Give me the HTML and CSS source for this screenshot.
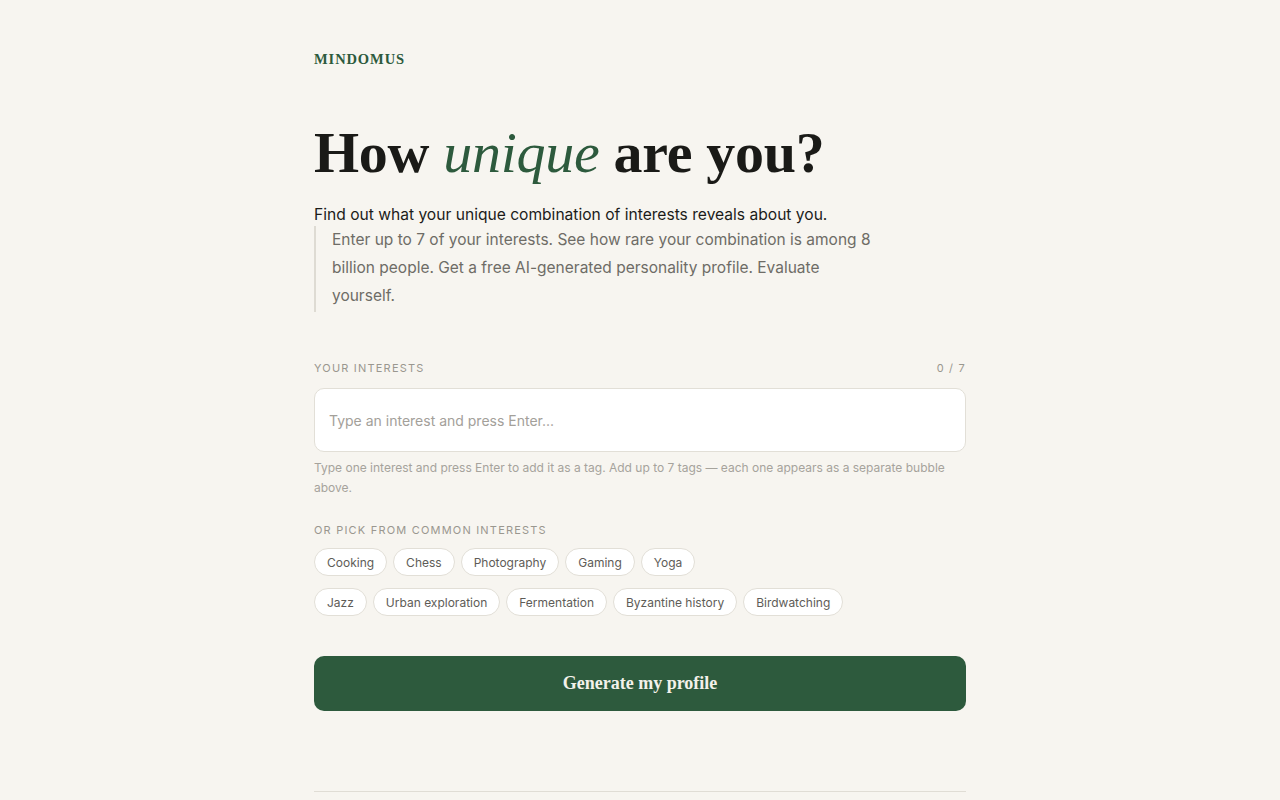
FILE: index.html
```html
<!DOCTYPE html>
<html lang="en">
<head>
<meta charset="utf-8">
<title>Mindomus — How unique are you?</title>
<link rel="stylesheet" href="styles.css">
</head>
<body>
<main class="page">
  <header class="brand">MINDOMUS</header>
  <h1 class="title">How <em>unique</em> are you?</h1>
  <p class="lead">Find out what your unique combination of interests reveals about you.</p>
  <blockquote class="intro">Enter up to 7 of your interests. See how rare your combination is among 8 billion people. Get a free AI-generated personality profile. Evaluate yourself.</blockquote>

  <section class="field">
    <div class="field-head">
      <span class="label">YOUR INTERESTS</span>
      <span class="count">0 / 7</span>
    </div>
    <div class="input-box">
      <input class="input" type="text" placeholder="Type an interest and press Enter...">
    </div>
    <p class="hint">Type one interest and press Enter to add it as a tag. Add up to 7 tags — each one appears as a separate bubble above.</p>
  </section>

  <section class="picks">
    <div class="label">OR PICK FROM COMMON INTERESTS</div>
    <div class="chip-rows">
      <div class="chips">
        <span class="chip">Cooking</span>
        <span class="chip">Chess</span>
        <span class="chip">Photography</span>
        <span class="chip">Gaming</span>
        <span class="chip">Yoga</span>
      </div>
      <div class="chips">
        <span class="chip">Jazz</span>
        <span class="chip">Urban exploration</span>
        <span class="chip">Fermentation</span>
        <span class="chip">Byzantine history</span>
        <span class="chip">Birdwatching</span>
      </div>
    </div>
  </section>

  <button class="cta" type="button">Generate my profile</button>

  <hr class="rule">
</main>
</body>
</html>
```

FILE: styles.css
```css
* { box-sizing: border-box; }
html, body { margin: 0; padding: 0; }
body {
  background: #f7f5f0;
  font-family: "Inter", "Liberation Sans", sans-serif;
  color: #1c1c1a;
}
.page {
  width: 652px;
  margin: 0 auto;
  padding-top: 50px;
}
.brand {
  font-family: "Liberation Serif", serif;
  font-weight: 700;
  font-size: 14.5px;
  letter-spacing: 0.9px;
  color: #2d5a3d;
  line-height: 18px;
}
.title {
  font-family: "Liberation Serif", serif;
  font-weight: 700;
  font-size: 58px;
  line-height: 70px;
  letter-spacing: -0.3px;
  margin: 50px 0 0;
  color: #1a1a17;
}
.title em {
  font-style: italic;
  font-weight: 400;
  color: #2d5a3d;
}
.lead {
  margin: 16px 0 0;
  font-size: 15.6px;
  line-height: 22px;
  color: #1c1c1a;
}
.intro {
  margin: 0;
  border-left: 2px solid #dedbd3;
  padding: 0 0 2px 16px;
  max-width: 564px;
  font-size: 15.5px;
  line-height: 28px;
  color: #6e6c66;
}
.field { margin-top: 48px; }
.field-head {
  display: flex;
  justify-content: space-between;
  align-items: center;
}
.label {
  font-size: 11px;
  letter-spacing: 1.2px;
  color: #9a978f;
  line-height: 16px;
}
.count {
  font-size: 11px;
  letter-spacing: 1.2px;
  color: #9a978f;
}
.input-box {
  margin-top: 12px;
  height: 64px;
  background: #fff;
  border: 1px solid #e2dfd7;
  border-radius: 10px;
  display: flex;
  align-items: center;
  padding: 0 12px;
}
.input {
  border: 0;
  outline: 0;
  background: transparent;
  width: 100%;
  font-family: inherit;
  font-size: 14px;
  color: #1c1c1a;
}
.input::placeholder { color: #a3a09a; }
.hint {
  margin: 6px 0 0;
  font-size: 12px;
  line-height: 20px;
  color: #a6a39c;
}
.picks { margin-top: 24px; }
.chip-rows {
  margin-top: 10px;
  display: flex;
  flex-direction: column;
  gap: 12px;
}
.chips {
  display: flex;
  gap: 6px;
}
.chip {
  height: 28px;
  display: inline-flex;
  align-items: center;
  padding: 0 12px;
  background: #fff;
  border: 1px solid #e2dfd7;
  border-radius: 14px;
  font-size: 12px;
  color: #5e5c57;
}
.cta {
  display: block;
  width: 100%;
  margin-top: 40px;
  height: 55px;
  border: 0;
  border-radius: 10px;
  background: #2d5a3d;
  color: #f3f1ea;
  font-family: "Liberation Serif", serif;
  font-weight: 700;
  font-size: 18px;
}
.rule {
  margin: 80px 0 0;
  border: 0;
  border-top: 1px solid #e0ddd5;
}
```
